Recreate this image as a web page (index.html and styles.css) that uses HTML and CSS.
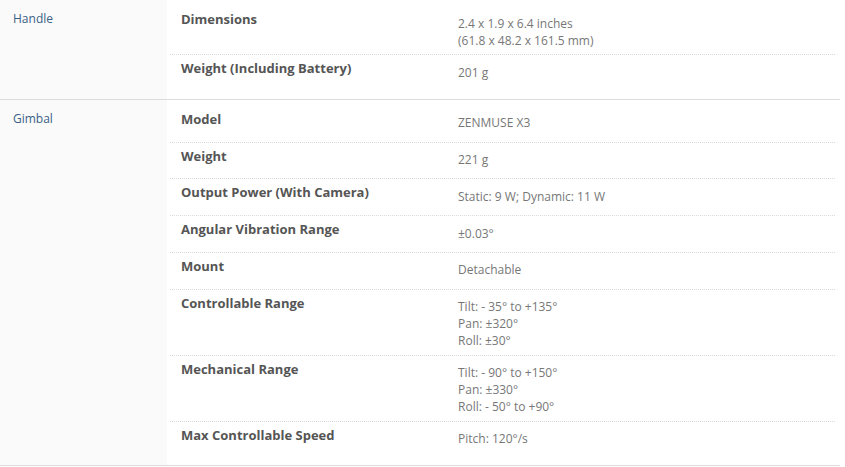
FILE: index.html
```html
<!DOCTYPE html>
<html>
<head>
<meta charset="utf-8">
<link rel="stylesheet" href="styles.css">
</head>
<body>
<div class="specs">
  <section class="group">
    <div class="group-title">Handle</div>
    <div class="rows">
      <div class="row"><div class="label">Dimensions</div><div class="value">2.4 x 1.9 x 6.4 inches<br>(61.8 x 48.2 x 161.5 mm)</div></div>
      <div class="row"><div class="label">Weight (Including Battery)</div><div class="value">201 g</div></div>
    </div>
  </section>
  <section class="group">
    <div class="group-title">Gimbal</div>
    <div class="rows">
      <div class="row"><div class="label">Model</div><div class="value">ZENMUSE X3</div></div>
      <div class="row"><div class="label">Weight</div><div class="value">221 g</div></div>
      <div class="row"><div class="label">Output Power (With Camera)</div><div class="value">Static: 9 W; Dynamic: 11 W</div></div>
      <div class="row"><div class="label">Angular Vibration Range</div><div class="value">±0.03°</div></div>
      <div class="row"><div class="label">Mount</div><div class="value">Detachable</div></div>
      <div class="row"><div class="label">Controllable Range</div><div class="value">Tilt: - 35° to +135°<br>Pan: ±320°<br>Roll: ±30°</div></div>
      <div class="row"><div class="label">Mechanical Range</div><div class="value">Tilt: - 90° to +150°<br>Pan: ±330°<br>Roll: - 50° to +90°</div></div>
      <div class="row"><div class="label">Max Controllable Speed</div><div class="value">Pitch: 120°/s</div></div>
    </div>
  </section>
</div>
</body>
</html>
```

FILE: styles.css
```css
html, body {
  margin: 0;
  padding: 0;
  background: #fff;
}
body {
  font-family: "Open Sans", "Liberation Sans", sans-serif;
}
.specs {
  width: 840px;
}
.group {
  display: grid;
  grid-template-columns: 167px 1fr;
  border-bottom: 1px solid #dcdcdc;
}
.group-title {
  background: #fafafa;
  padding: 10px 0 0 13px;
  font-size: 12px;
  line-height: 17px;
  color: #3a6186;
}
.rows {
  padding: 6px 5px 8px 3px;
}
.row {
  display: grid;
  grid-template-columns: 288px 1fr;
  border-bottom: 1px dotted #dadada;
}
.row:last-child {
  border-bottom: none;
}
.label {
  padding: 4px 0 13.75px 11px;
  font-size: 13px;
  line-height: 18px;
  font-weight: 700;
  color: #555;
}
.value {
  padding: 8.5px 0 5.5px 0;
  font-size: 12px;
  line-height: 17px;
  color: #777;
}
```
